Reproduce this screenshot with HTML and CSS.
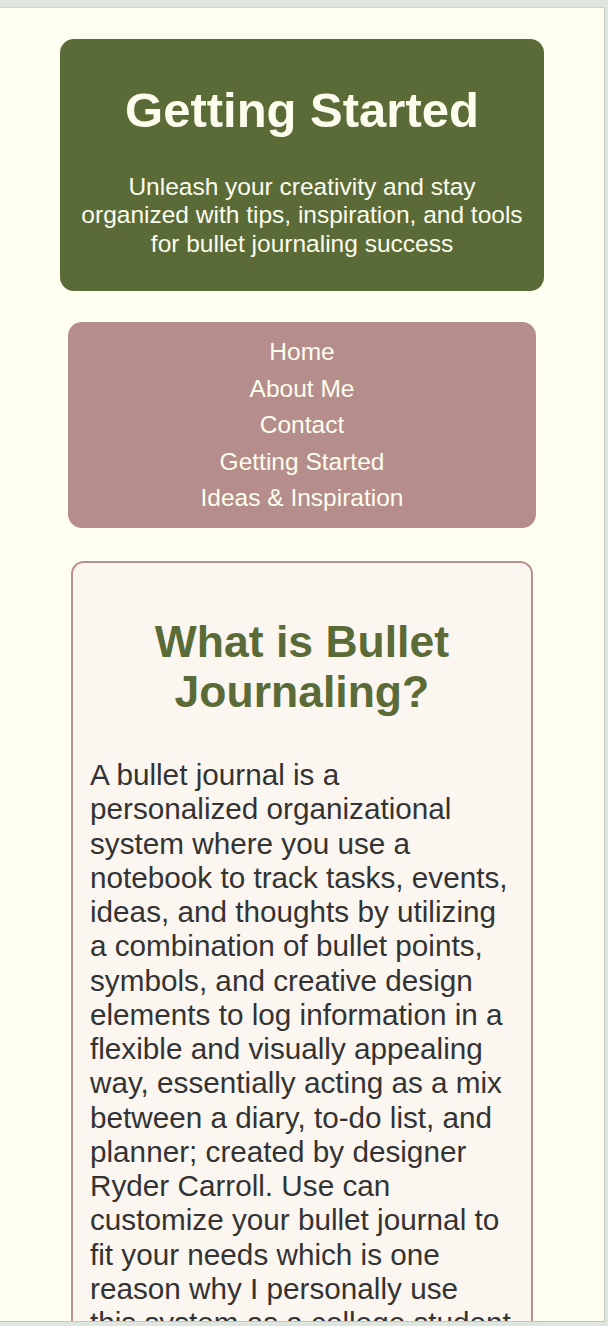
FILE: index.html
```html
<!DOCTYPE html>
<html lang="en">
<head>
<meta charset="utf-8">
<title>Getting Started</title>
<link rel="stylesheet" href="styles.css">
</head>
<body>
<div class="viewport">
  <header class="hero">
    <h1 class="hero-title">Getting Started</h1>
    <p class="hero-sub">Unleash your creativity and stay organized with tips, inspiration, and tools for bullet journaling success</p>
  </header>
  <nav class="menu">
    <ul class="menu-list">
      <li><a href="#">Home</a></li>
      <li><a href="#">About Me</a></li>
      <li><a href="#">Contact</a></li>
      <li><a href="#">Getting Started</a></li>
      <li><a href="#">Ideas &amp; Inspiration</a></li>
    </ul>
  </nav>
  <section class="card">
    <h2 class="card-title">What is Bullet Journaling?</h2>
    <p class="card-text">A bullet journal is a personalized organizational system where you use a notebook to track tasks, events, ideas, and thoughts by utilizing a combination of bullet points, symbols, and creative design elements to log information in a flexible and visually appealing way, essentially acting as a mix between a diary, to-do list, and planner; created by designer Ryder Carroll. Use can customize your bullet journal to fit your needs which is one reason why I personally use this system as a college student to stay on top of my classes, goals, and everyday life.</p>
  </section>
</div>
</body>
</html>
```
FILE: styles.css
```css
html, body {
  margin: 0;
  padding: 0;
}
body {
  background: #dfe6de;
  font-family: "Liberation Sans", Arial, Helvetica, sans-serif;
  height: 1326px;
  overflow: hidden;
}
.viewport {
  margin-top: 7px;
  border-top: 1px solid #cfd7cd;
  border-right: 1px solid #c6c9c4;
  border-bottom: 1px solid #c3c6c1;
  width: 605px;
  height: 1315px;
  background: #fefff0;
  overflow: hidden;
  padding-top: 31px;
  box-sizing: border-box;
}
.hero {
  width: 484px;
  margin: 0 auto;
  background: #5a6b38;
  border-radius: 14px;
  padding: 43px 20px 33px;
  box-sizing: border-box;
  text-align: center;
  color: #fdfdee;
}
.hero-title {
  margin: 0;
  font-size: 49px;
  line-height: 56px;
  font-weight: bold;
}
.hero-sub {
  margin: 35px 0 0;
  font-size: 24.5px;
  line-height: 28.4px;
}
.menu {
  width: 468px;
  margin: 31px auto 0;
  background: #b58e8b;
  border-radius: 14px;
  padding: 12px 0 11.5px;
  box-sizing: border-box;
}
.menu-list {
  list-style: none;
  margin: 0;
  padding: 0;
  text-align: center;
}
.menu-list li {
  font-size: 24.5px;
  line-height: 36.5px;
}
.menu-list a {
  color: #fdfdee;
  text-decoration: none;
}
.card {
  width: 462px;
  margin: 33px auto 0;
  background: #fcf6f0;
  border: 2px solid #b8918e;
  border-radius: 13px;
  padding: 54px 19.2px 40px 17px;
  box-sizing: border-box;
}
.card-title {
  margin: 0;
  text-align: center;
  color: #5a6b38;
  font-size: 44.5px;
  line-height: 50px;
  font-weight: bold;
  padding-left: 2px;
}
.card-text {
  margin: 41px 0 0;
  color: #333333;
  font-size: 29.7px;
  line-height: 34.25px;
}
```
